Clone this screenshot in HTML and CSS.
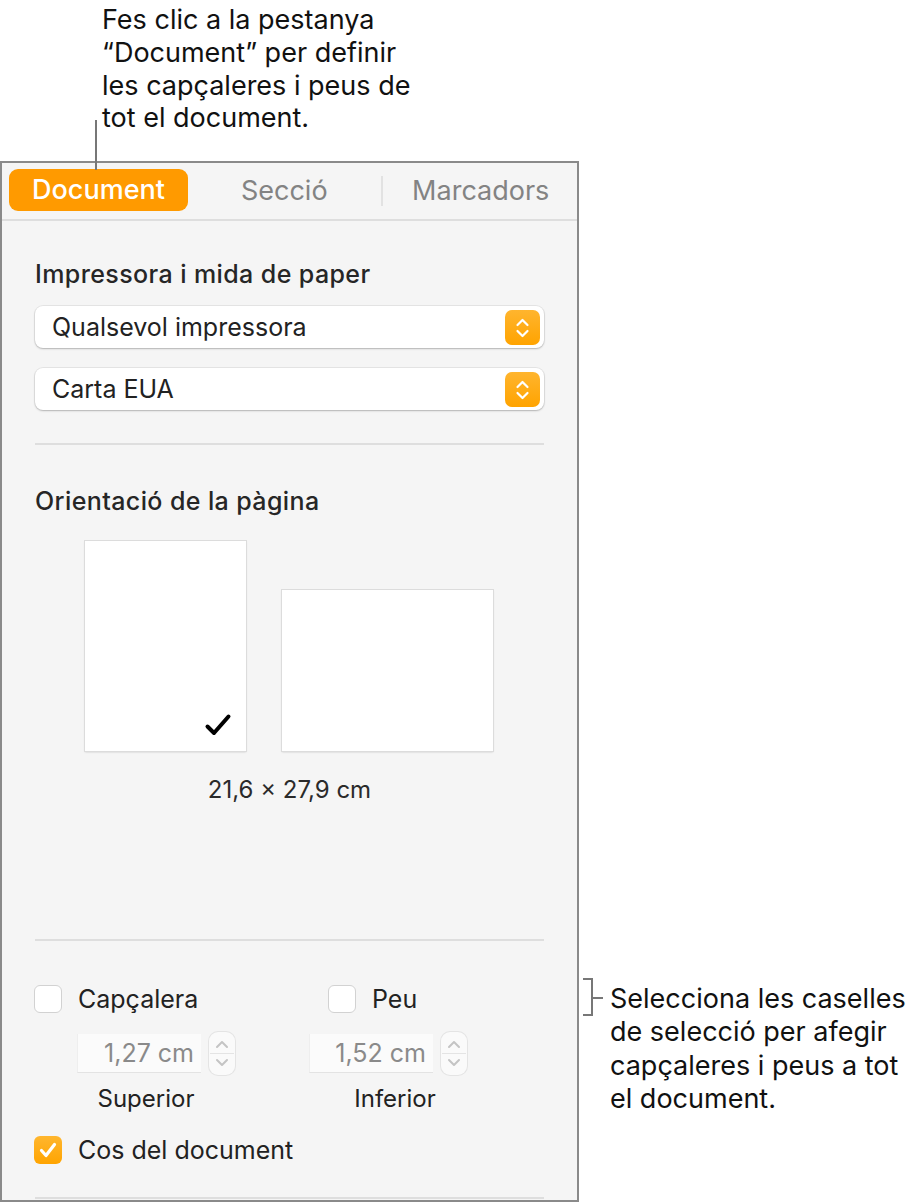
FILE: index.html
```html
<!DOCTYPE html>
<html lang="ca">

<head>
    <meta charset="UTF-8">
    <meta name="viewport" content="width=device-width, initial-scale=1.0">
    <title>Document</title>
    <link rel="stylesheet" href="styles.css">
</head>

<body>
    <div class="page">
        <div class="left">
            <p class="note note-top">Fes clic a la pestanya<br>“Document” per definir<br>les capçaleres i peus de<br>tot el document.</p>
            <span class="leader"></span>

            <div class="panel">
                <div class="tabs">
                    <div class="tab active">Document</div>
                    <div class="tab">Secció</div>
                    <div class="tab sep">Marcadors</div>
                </div>

                <div class="content">
                    <h2 class="heading">Impressora i mida de paper</h2>
                    <div class="popup">
                        <span>Qualsevol impressora</span>
                        <span class="popup-arrows">
                            <svg width="35" height="35" viewBox="0 0 35 35"><path d="M12.5 15l5-5 5 5M12.5 21l5 5 5-5" fill="none" stroke="#fff" stroke-width="2.2" stroke-linecap="round" stroke-linejoin="round"/></svg>
                        </span>
                    </div>
                    <div class="popup">
                        <span>Carta EUA</span>
                        <span class="popup-arrows">
                            <svg width="35" height="35" viewBox="0 0 35 35"><path d="M12.5 15l5-5 5 5M12.5 21l5 5 5-5" fill="none" stroke="#fff" stroke-width="2.2" stroke-linecap="round" stroke-linejoin="round"/></svg>
                        </span>
                    </div>

                    <hr class="divider div-1">

                    <h2 class="heading heading-2">Orientació de la pàgina</h2>
                    <div class="orient">
                        <div class="sheet portrait">
                            <svg class="tick" width="28" height="24" viewBox="0 0 28 24"><path d="M3.5 13.5l6.5 6.5L24.5 3.5" fill="none" stroke="#000" stroke-width="4" stroke-linecap="round" stroke-linejoin="round"/></svg>
                        </div>
                        <div class="sheet landscape"></div>
                    </div>
                    <p class="size">21,6 × 27,9 cm</p>

                    <hr class="divider div-2">

                    <div class="checks">
                        <label class="check"><span class="box"></span>Capçalera</label>
                        <label class="check"><span class="box"></span>Peu</label>
                    </div>

                    <div class="fields">
                        <div class="field">
                            <div class="field-row">
                                <span class="num">1,27 cm</span>
                                <span class="stepper">
                                    <svg width="26" height="43" viewBox="0 0 26 43"><path d="M8 15l5-5 5 5M8 28l5 5 5-5" fill="none" stroke="#c4c4c4" stroke-width="2" stroke-linecap="round" stroke-linejoin="round"/><path d="M1 21.5h24" stroke="#e4e4e4" stroke-width="1"/></svg>
                                </span>
                            </div>
                            <span class="field-label lbl-top">Superior</span>
                        </div>
                        <div class="field">
                            <div class="field-row">
                                <span class="num">1,52 cm</span>
                                <span class="stepper">
                                    <svg width="26" height="43" viewBox="0 0 26 43"><path d="M8 15l5-5 5 5M8 28l5 5 5-5" fill="none" stroke="#c4c4c4" stroke-width="2" stroke-linecap="round" stroke-linejoin="round"/><path d="M1 21.5h24" stroke="#e4e4e4" stroke-width="1"/></svg>
                                </span>
                            </div>
                            <span class="field-label lbl-bottom">Inferior</span>
                        </div>
                    </div>

                    <label class="check check-body">
                        <span class="box on">
                            <svg width="28" height="28" viewBox="0 0 28 28"><path d="M7.5 14.5l4.5 5 8.5-11" fill="none" stroke="#fff" stroke-width="3.2" stroke-linecap="round" stroke-linejoin="round"/></svg>
                        </span>Cos del document
                    </label>

                    <hr class="divider div-3">
                </div>
            </div>
        </div>

        <div class="aside">
            <span class="bracket"></span>
            <p class="note note-side">Selecciona les caselles<br>de selecció per afegir<br>capçaleres i peus a tot<br>el document.</p>
        </div>
    </div>
</body>

</html>
```

FILE: styles.css
```css
* {
    box-sizing: border-box;
}

html,
body {
    margin: 0;
    padding: 0;
    background-color: #fff;
    font-family: Inter, "Noto Sans", sans-serif;
    color: #1d1d1d;
}

.page {
    display: flex;
    width: 921px;
    height: 1202px;
    overflow: hidden;
}

.left {
    position: relative;
    width: 579px;
    flex: none;
}

.note {
    margin: 0;
    font-size: 27px;
    line-height: 32.8px;
    color: #111;
    white-space: nowrap;
}

.note-top {
    padding: 4px 0 0 102px;
    height: 161px;
}

.leader {
    position: absolute;
    left: 95px;
    top: 120px;
    width: 2px;
    height: 50px;
    background: #777;
    z-index: 2;
}

.panel {
    width: 579px;
    height: 1041px;
    border: 2px solid #8a8a8a;
    background: #f5f5f5;
}

/* tabs */

.tabs {
    display: flex;
    align-items: center;
    height: 58px;
    padding: 6px 0 0 7px;
    border-bottom: 2px solid #dedede;
}

.tab {
    flex: 1;
    text-align: center;
    font-size: 27px;
    font-weight: 400;
    color: #838383;
    line-height: 30px;
    margin-top: -6px;
}

.tab.active {
    flex: none;
    width: 179px;
    height: 42px;
    line-height: 42px;
    border-radius: 9px;
    background: #ff9a00;
    color: #fff;
    font-weight: 500;
    margin-top: -8px;
}

.tab.sep {
    border-left: 2px solid #e2e2e2;
    padding-left: 2px;
}

/* content */

.content {
    padding: 39px 33px 0 33px;
}

.heading {
    margin: 0;
    font-size: 25px;
    font-weight: 500;
    letter-spacing: 0.4px;
    line-height: 28px;
    color: #262626;
}

.heading-2 {
    margin-top: 42px;
}

.popup {
    display: flex;
    align-items: center;
    justify-content: space-between;
    height: 42px;
    margin-top: 18px;
    padding: 0 4px 0 17px;
    background: #fff;
    border-radius: 8px;
    box-shadow: 0 0 0 1px rgba(0, 0, 0, 0.06), 0 1px 2px rgba(0, 0, 0, 0.22);
    font-size: 25px;
    color: #222;
}

.popup + .popup {
    margin-top: 20px;
}

.popup-arrows {
    display: block;
    width: 35px;
    height: 35px;
    border-radius: 7px;
    background: linear-gradient(#ffb52e, #ffa300);
}

.popup-arrows svg {
    display: block;
}

.divider {
    margin: 0;
    border: none;
    height: 2px;
    background: #dedede;
}

.div-1 {
    margin-top: 33px;
}

.div-2 {
    margin-top: 135px;
}

.div-3 {
    margin-top: 33px;
}

.orient {
    display: flex;
    justify-content: center;
    align-items: flex-end;
    gap: 36px;
    margin-top: 26px;
    padding-right: 1px;
}

.sheet {
    position: relative;
    background: #fff;
    box-shadow: 0 0 0 1px #dcdcdc, 0 1px 2px rgba(0, 0, 0, 0.2);
}

.portrait {
    width: 161px;
    height: 210px;
}

.landscape {
    width: 211px;
    height: 161px;
}

.tick {
    position: absolute;
    right: 14px;
    bottom: 14px;
}

.size {
    margin: 25px 0 0;
    text-align: center;
    font-size: 24px;
    line-height: 28px;
    color: #2a2a2a;
}

/* header / footer */

.checks {
    display: grid;
    grid-template-columns: 294px 1fr;
    margin-top: 44px;
    margin-left: -1px;
}

.check {
    display: flex;
    align-items: center;
    gap: 16px;
    font-size: 25px;
    line-height: 28px;
    color: #222;
}

.box {
    display: block;
    width: 28px;
    height: 28px;
    background: #fff;
    border: 1px solid #d2d2d2;
    border-radius: 6px;
}

.box.on {
    border: none;
    background: linear-gradient(#ffb62e, #ffa400);
}

.box svg {
    display: block;
}

.fields {
    display: flex;
    margin-top: 19px;
    margin-left: 42px;
}

.field {
    width: 232px;
}

.field-row {
    display: flex;
    align-items: center;
    gap: 8px;
}

.num {
    display: block;
    width: 124px;
    height: 39px;
    line-height: 39px;
    padding-right: 7px;
    text-align: right;
    background: #fbfbfb;
    border-bottom: 1px solid #e3e3e3;
    border-left: 1px solid #eee;
    font-size: 25px;
    color: #8a8a8a;
}

.stepper {
    display: block;
    width: 26px;
    height: 43px;
    border-radius: 9px;
    background: #fafafa;
    box-shadow: 0 0 0 1px #e4e4e4;
}

.stepper svg {
    display: block;
}

.field-label {
    display: block;
    margin-top: 10px;
    text-align: center;
    font-size: 24px;
    line-height: 28px;
    color: #222;
}

.lbl-top {
    width: 138px;
}

.lbl-bottom {
    width: 172px;
}

.check-body {
    margin-top: 23px;
    margin-left: -1px;
}

/* side note */

.aside {
    position: relative;
    padding: 978px 0 0 31px;
}

.bracket {
    position: absolute;
    left: 4px;
    top: 978px;
    width: 10px;
    height: 38px;
    border: 2px solid #777;
    border-left: none;
}

.bracket::after {
    content: "";
    position: absolute;
    left: 8px;
    top: 17px;
    width: 12px;
    height: 2px;
    background: #777;
}

.note-side {
    margin-top: 4px;
    line-height: 33.3px;
}
```
